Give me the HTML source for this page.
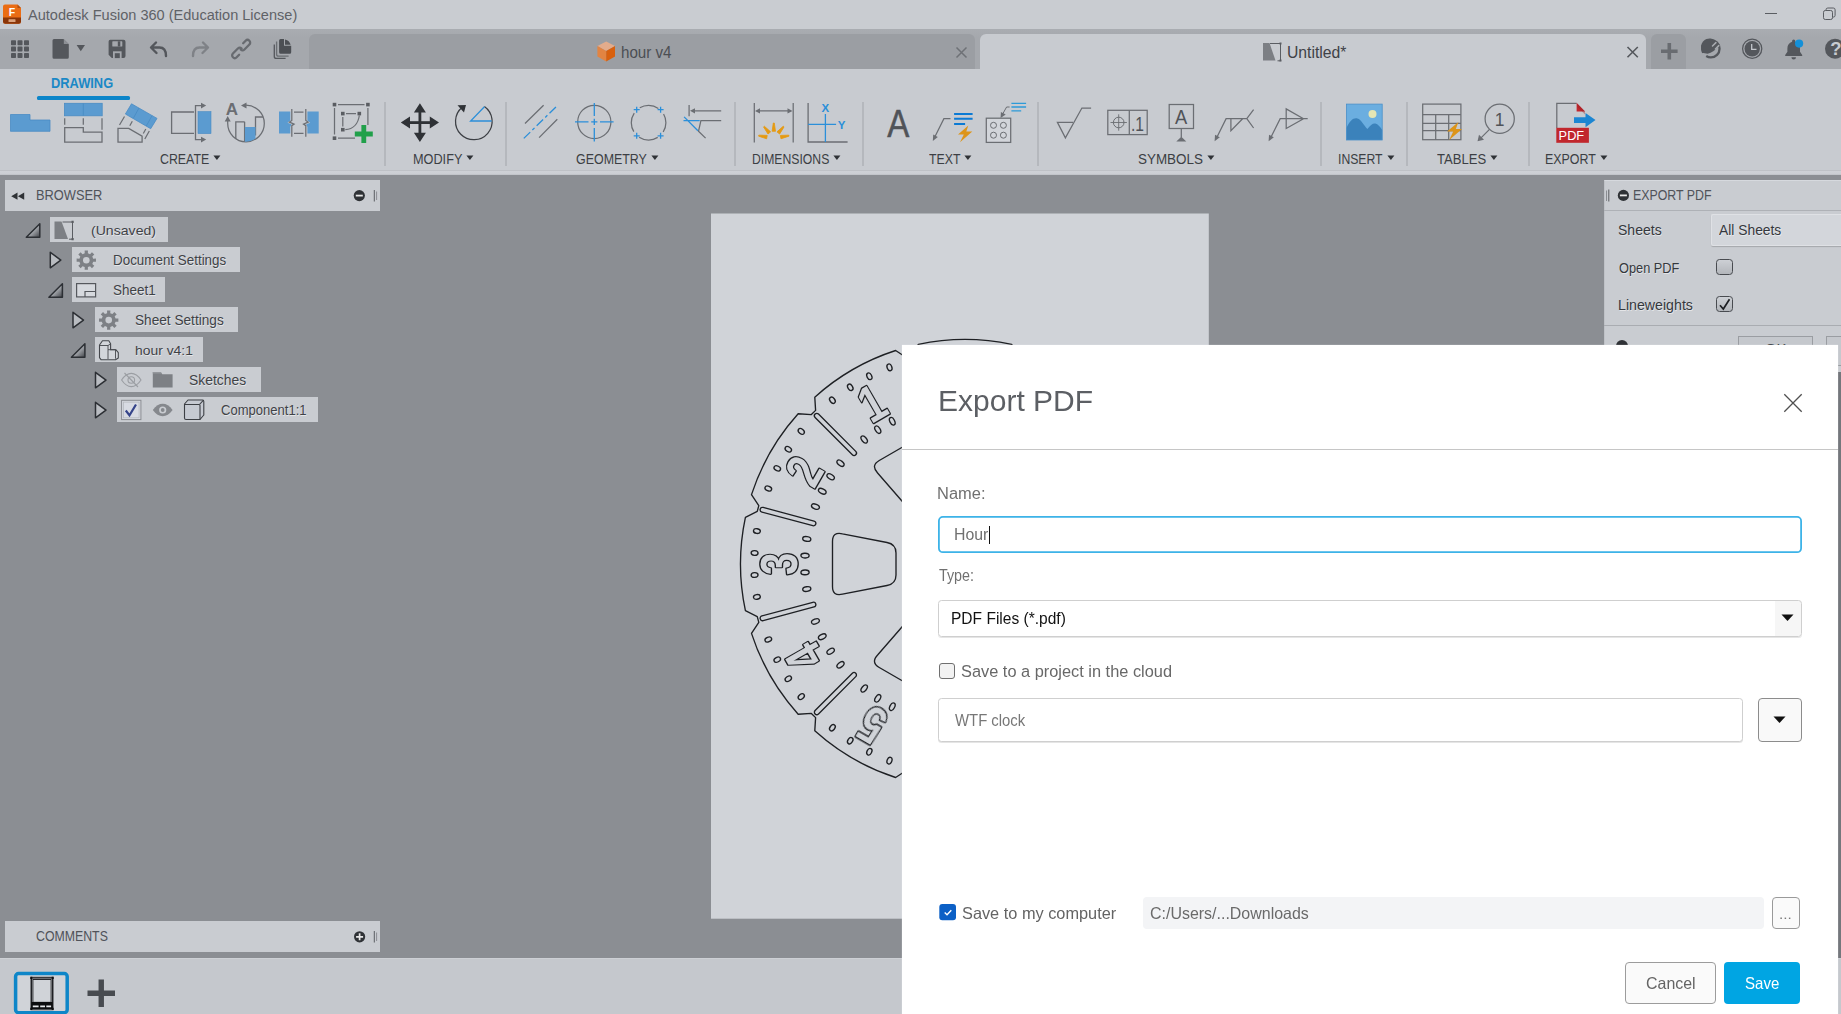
<!DOCTYPE html>
<html lang="en">
<head>
<meta charset="utf-8">
<title>Autodesk Fusion 360 (Education License)</title>
<style>
*{box-sizing:border-box;margin:0;padding:0}
html,body{width:1841px;height:1014px;overflow:hidden;background:#8b8e93;font-family:"Liberation Sans",sans-serif;}
body{position:relative}
.abs{position:absolute}
svg{position:absolute;overflow:visible}
.t{position:absolute;white-space:nowrap;line-height:1;transform-origin:0 0}
#titlebar{position:absolute;left:0;top:0;width:1841px;height:29px;background:#c9ccd1}
#qbar{position:absolute;left:0;top:29px;width:1841px;height:40px;background:linear-gradient(#a9acb1 0,#a5a8ad 8px,#a5a8ad)}
#ribbon{position:absolute;left:0;top:69px;width:1841px;height:102px;background:#c8cbd0}
#ribbonline{position:absolute;left:0;top:170px;width:1841px;height:5px;background:linear-gradient(#bec1c6 0,#bec1c6 1px,#ced1d6 1px,#cbced3 4px,#b9bcc1 5px)}
.tab{position:absolute;top:34px;height:35px;border-radius:6px 6px 0 0}
.sep{position:absolute;top:101.5px;width:2px;height:64px;background:#b5b8bd}
</style>
</head>
<body>
<svg width="500" height="710" viewBox="0 0 500 710" style="left:711px;top:213px"><rect x="0" y="0.5" width="497.8" height="705.2" fill="#d0d3d8"/></svg>
<svg width="1841" height="1014" viewBox="0 0 1841 1014" style="left:0;top:0">
<defs><clipPath id="shc"><rect x="711" y="213.5" width="497.8" height="705.2"/></clipPath></defs>
<g clip-path="url(#shc)" fill="none" stroke="#1e2024" stroke-width="1.35" stroke-linejoin="round">
<path d="M1011.68 344.41A224.5 224.5 0 0 0 918.32 344.41L912.43 356.25L906.65 357.8L895.63 350.49A224.5 224.5 0 0 0 814.78 397.16L815.6 410.37L811.37 414.6L798.16 413.78A224.5 224.5 0 0 0 751.49 494.63L758.8 505.65L757.25 511.43L745.41 517.32A224.5 224.5 0 0 0 745.41 610.68L757.25 616.57L758.8 622.35L751.49 633.37A224.5 224.5 0 0 0 798.16 714.22L811.37 713.4L815.6 717.63L814.78 730.84A224.5 224.5 0 0 0 895.63 777.51L906.65 770.2L912.43 771.75L918.32 783.59A224.5 224.5 0 0 0 1011.68 783.59L1017.57 771.75L1023.35 770.2L1034.37 777.51A224.5 224.5 0 0 0 1115.22 730.84L1114.4 717.63L1118.63 713.4L1131.84 714.22A224.5 224.5 0 0 0 1178.51 633.37L1171.2 622.35L1172.75 616.57L1184.59 610.68A224.5 224.5 0 0 0 1184.59 517.32L1172.75 511.43L1171.2 505.65L1178.51 494.63A224.5 224.5 0 0 0 1131.84 413.78L1118.63 414.6L1114.4 410.37L1115.22 397.16A224.5 224.5 0 0 0 1034.37 350.49L1023.35 357.8L1017.57 356.25L1011.68 344.41Z"/>
<rect x="-2.4" y="-212" width="4.8" height="57.5" rx="2.4" transform="translate(965 564) rotate(-15)"/>
<rect x="-2.4" y="-212" width="4.8" height="57.5" rx="2.4" transform="translate(965 564) rotate(-45)"/>
<rect x="-2.4" y="-212" width="4.8" height="57.5" rx="2.4" transform="translate(965 564) rotate(-75)"/>
<rect x="-2.4" y="-212" width="4.8" height="57.5" rx="2.4" transform="translate(965 564) rotate(-105)"/>
<rect x="-2.4" y="-212" width="4.8" height="57.5" rx="2.4" transform="translate(965 564) rotate(-135)"/>
<rect x="-2.4" y="-212" width="4.8" height="57.5" rx="2.4" transform="translate(965 564) rotate(-165)"/>
<rect x="-2.4" y="-212" width="4.8" height="57.5" rx="2.4" transform="translate(965 564) rotate(-195)"/>
<rect x="-2.4" y="-212" width="4.8" height="57.5" rx="2.4" transform="translate(965 564) rotate(-225)"/>
<rect x="-2.4" y="-212" width="4.8" height="57.5" rx="2.4" transform="translate(965 564) rotate(-255)"/>
<rect x="-2.4" y="-212" width="4.8" height="57.5" rx="2.4" transform="translate(965 564) rotate(-285)"/>
<rect x="-2.4" y="-212" width="4.8" height="57.5" rx="2.4" transform="translate(965 564) rotate(-315)"/>
<rect x="-2.4" y="-212" width="4.8" height="57.5" rx="2.4" transform="translate(965 564) rotate(-345)"/>
<ellipse cx="0" cy="-210.7" rx="2.35" ry="3.45" transform="translate(965 564) rotate(-3)"/>
<ellipse cx="0" cy="-160.2" rx="2.35" ry="4.1" transform="translate(965 564) rotate(-3)"/>
<ellipse cx="0" cy="-210.7" rx="2.35" ry="3.45" transform="translate(965 564) rotate(-9)"/>
<ellipse cx="0" cy="-160.2" rx="2.35" ry="4.1" transform="translate(965 564) rotate(-9)"/>
<ellipse cx="0" cy="-210.7" rx="2.35" ry="3.45" transform="translate(965 564) rotate(-21)"/>
<ellipse cx="0" cy="-160.2" rx="2.35" ry="4.1" transform="translate(965 564) rotate(-21)"/>
<ellipse cx="0" cy="-210.7" rx="2.35" ry="3.45" transform="translate(965 564) rotate(-27)"/>
<ellipse cx="0" cy="-160.2" rx="2.35" ry="4.1" transform="translate(965 564) rotate(-27)"/>
<ellipse cx="0" cy="-210.7" rx="2.35" ry="3.45" transform="translate(965 564) rotate(-33)"/>
<ellipse cx="0" cy="-160.2" rx="2.35" ry="4.1" transform="translate(965 564) rotate(-33)"/>
<ellipse cx="0" cy="-210.7" rx="2.35" ry="3.45" transform="translate(965 564) rotate(-39)"/>
<ellipse cx="0" cy="-160.2" rx="2.35" ry="4.1" transform="translate(965 564) rotate(-39)"/>
<ellipse cx="0" cy="-210.7" rx="2.35" ry="3.45" transform="translate(965 564) rotate(-51)"/>
<ellipse cx="0" cy="-160.2" rx="2.35" ry="4.1" transform="translate(965 564) rotate(-51)"/>
<ellipse cx="0" cy="-210.7" rx="2.35" ry="3.45" transform="translate(965 564) rotate(-57)"/>
<ellipse cx="0" cy="-160.2" rx="2.35" ry="4.1" transform="translate(965 564) rotate(-57)"/>
<ellipse cx="0" cy="-210.7" rx="2.35" ry="3.45" transform="translate(965 564) rotate(-63)"/>
<ellipse cx="0" cy="-160.2" rx="2.35" ry="4.1" transform="translate(965 564) rotate(-63)"/>
<ellipse cx="0" cy="-210.7" rx="2.35" ry="3.45" transform="translate(965 564) rotate(-69)"/>
<ellipse cx="0" cy="-160.2" rx="2.35" ry="4.1" transform="translate(965 564) rotate(-69)"/>
<ellipse cx="0" cy="-210.7" rx="2.35" ry="3.45" transform="translate(965 564) rotate(-81)"/>
<ellipse cx="0" cy="-160.2" rx="2.35" ry="4.1" transform="translate(965 564) rotate(-81)"/>
<ellipse cx="0" cy="-210.7" rx="2.35" ry="3.45" transform="translate(965 564) rotate(-87)"/>
<ellipse cx="0" cy="-160.2" rx="2.35" ry="4.1" transform="translate(965 564) rotate(-87)"/>
<ellipse cx="0" cy="-210.7" rx="2.35" ry="3.45" transform="translate(965 564) rotate(-93)"/>
<ellipse cx="0" cy="-160.2" rx="2.35" ry="4.1" transform="translate(965 564) rotate(-93)"/>
<ellipse cx="0" cy="-210.7" rx="2.35" ry="3.45" transform="translate(965 564) rotate(-99)"/>
<ellipse cx="0" cy="-160.2" rx="2.35" ry="4.1" transform="translate(965 564) rotate(-99)"/>
<ellipse cx="0" cy="-210.7" rx="2.35" ry="3.45" transform="translate(965 564) rotate(-111)"/>
<ellipse cx="0" cy="-160.2" rx="2.35" ry="4.1" transform="translate(965 564) rotate(-111)"/>
<ellipse cx="0" cy="-210.7" rx="2.35" ry="3.45" transform="translate(965 564) rotate(-117)"/>
<ellipse cx="0" cy="-160.2" rx="2.35" ry="4.1" transform="translate(965 564) rotate(-117)"/>
<ellipse cx="0" cy="-210.7" rx="2.35" ry="3.45" transform="translate(965 564) rotate(-123)"/>
<ellipse cx="0" cy="-160.2" rx="2.35" ry="4.1" transform="translate(965 564) rotate(-123)"/>
<ellipse cx="0" cy="-210.7" rx="2.35" ry="3.45" transform="translate(965 564) rotate(-129)"/>
<ellipse cx="0" cy="-160.2" rx="2.35" ry="4.1" transform="translate(965 564) rotate(-129)"/>
<ellipse cx="0" cy="-210.7" rx="2.35" ry="3.45" transform="translate(965 564) rotate(-141)"/>
<ellipse cx="0" cy="-160.2" rx="2.35" ry="4.1" transform="translate(965 564) rotate(-141)"/>
<ellipse cx="0" cy="-210.7" rx="2.35" ry="3.45" transform="translate(965 564) rotate(-147)"/>
<ellipse cx="0" cy="-160.2" rx="2.35" ry="4.1" transform="translate(965 564) rotate(-147)"/>
<ellipse cx="0" cy="-210.7" rx="2.35" ry="3.45" transform="translate(965 564) rotate(-153)"/>
<ellipse cx="0" cy="-160.2" rx="2.35" ry="4.1" transform="translate(965 564) rotate(-153)"/>
<ellipse cx="0" cy="-210.7" rx="2.35" ry="3.45" transform="translate(965 564) rotate(-159)"/>
<ellipse cx="0" cy="-160.2" rx="2.35" ry="4.1" transform="translate(965 564) rotate(-159)"/>
<ellipse cx="0" cy="-210.7" rx="2.35" ry="3.45" transform="translate(965 564) rotate(-171)"/>
<ellipse cx="0" cy="-160.2" rx="2.35" ry="4.1" transform="translate(965 564) rotate(-171)"/>
<ellipse cx="0" cy="-210.7" rx="2.35" ry="3.45" transform="translate(965 564) rotate(-177)"/>
<ellipse cx="0" cy="-160.2" rx="2.35" ry="4.1" transform="translate(965 564) rotate(-177)"/>
<ellipse cx="0" cy="-210.7" rx="2.35" ry="3.45" transform="translate(965 564) rotate(-183)"/>
<ellipse cx="0" cy="-160.2" rx="2.35" ry="4.1" transform="translate(965 564) rotate(-183)"/>
<ellipse cx="0" cy="-210.7" rx="2.35" ry="3.45" transform="translate(965 564) rotate(-189)"/>
<ellipse cx="0" cy="-160.2" rx="2.35" ry="4.1" transform="translate(965 564) rotate(-189)"/>
<ellipse cx="0" cy="-210.7" rx="2.35" ry="3.45" transform="translate(965 564) rotate(-201)"/>
<ellipse cx="0" cy="-160.2" rx="2.35" ry="4.1" transform="translate(965 564) rotate(-201)"/>
<ellipse cx="0" cy="-210.7" rx="2.35" ry="3.45" transform="translate(965 564) rotate(-207)"/>
<ellipse cx="0" cy="-160.2" rx="2.35" ry="4.1" transform="translate(965 564) rotate(-207)"/>
<ellipse cx="0" cy="-210.7" rx="2.35" ry="3.45" transform="translate(965 564) rotate(-213)"/>
<ellipse cx="0" cy="-160.2" rx="2.35" ry="4.1" transform="translate(965 564) rotate(-213)"/>
<ellipse cx="0" cy="-210.7" rx="2.35" ry="3.45" transform="translate(965 564) rotate(-219)"/>
<ellipse cx="0" cy="-160.2" rx="2.35" ry="4.1" transform="translate(965 564) rotate(-219)"/>
<ellipse cx="0" cy="-210.7" rx="2.35" ry="3.45" transform="translate(965 564) rotate(-231)"/>
<ellipse cx="0" cy="-160.2" rx="2.35" ry="4.1" transform="translate(965 564) rotate(-231)"/>
<ellipse cx="0" cy="-210.7" rx="2.35" ry="3.45" transform="translate(965 564) rotate(-237)"/>
<ellipse cx="0" cy="-160.2" rx="2.35" ry="4.1" transform="translate(965 564) rotate(-237)"/>
<ellipse cx="0" cy="-210.7" rx="2.35" ry="3.45" transform="translate(965 564) rotate(-243)"/>
<ellipse cx="0" cy="-160.2" rx="2.35" ry="4.1" transform="translate(965 564) rotate(-243)"/>
<ellipse cx="0" cy="-210.7" rx="2.35" ry="3.45" transform="translate(965 564) rotate(-249)"/>
<ellipse cx="0" cy="-160.2" rx="2.35" ry="4.1" transform="translate(965 564) rotate(-249)"/>
<ellipse cx="0" cy="-210.7" rx="2.35" ry="3.45" transform="translate(965 564) rotate(-261)"/>
<ellipse cx="0" cy="-160.2" rx="2.35" ry="4.1" transform="translate(965 564) rotate(-261)"/>
<ellipse cx="0" cy="-210.7" rx="2.35" ry="3.45" transform="translate(965 564) rotate(-267)"/>
<ellipse cx="0" cy="-160.2" rx="2.35" ry="4.1" transform="translate(965 564) rotate(-267)"/>
<ellipse cx="0" cy="-210.7" rx="2.35" ry="3.45" transform="translate(965 564) rotate(-273)"/>
<ellipse cx="0" cy="-160.2" rx="2.35" ry="4.1" transform="translate(965 564) rotate(-273)"/>
<ellipse cx="0" cy="-210.7" rx="2.35" ry="3.45" transform="translate(965 564) rotate(-279)"/>
<ellipse cx="0" cy="-160.2" rx="2.35" ry="4.1" transform="translate(965 564) rotate(-279)"/>
<ellipse cx="0" cy="-210.7" rx="2.35" ry="3.45" transform="translate(965 564) rotate(-291)"/>
<ellipse cx="0" cy="-160.2" rx="2.35" ry="4.1" transform="translate(965 564) rotate(-291)"/>
<ellipse cx="0" cy="-210.7" rx="2.35" ry="3.45" transform="translate(965 564) rotate(-297)"/>
<ellipse cx="0" cy="-160.2" rx="2.35" ry="4.1" transform="translate(965 564) rotate(-297)"/>
<ellipse cx="0" cy="-210.7" rx="2.35" ry="3.45" transform="translate(965 564) rotate(-303)"/>
<ellipse cx="0" cy="-160.2" rx="2.35" ry="4.1" transform="translate(965 564) rotate(-303)"/>
<ellipse cx="0" cy="-210.7" rx="2.35" ry="3.45" transform="translate(965 564) rotate(-309)"/>
<ellipse cx="0" cy="-160.2" rx="2.35" ry="4.1" transform="translate(965 564) rotate(-309)"/>
<ellipse cx="0" cy="-210.7" rx="2.35" ry="3.45" transform="translate(965 564) rotate(-321)"/>
<ellipse cx="0" cy="-160.2" rx="2.35" ry="4.1" transform="translate(965 564) rotate(-321)"/>
<ellipse cx="0" cy="-210.7" rx="2.35" ry="3.45" transform="translate(965 564) rotate(-327)"/>
<ellipse cx="0" cy="-160.2" rx="2.35" ry="4.1" transform="translate(965 564) rotate(-327)"/>
<ellipse cx="0" cy="-210.7" rx="2.35" ry="3.45" transform="translate(965 564) rotate(-333)"/>
<ellipse cx="0" cy="-160.2" rx="2.35" ry="4.1" transform="translate(965 564) rotate(-333)"/>
<ellipse cx="0" cy="-210.7" rx="2.35" ry="3.45" transform="translate(965 564) rotate(-339)"/>
<ellipse cx="0" cy="-160.2" rx="2.35" ry="4.1" transform="translate(965 564) rotate(-339)"/>
<ellipse cx="0" cy="-210.7" rx="2.35" ry="3.45" transform="translate(965 564) rotate(-351)"/>
<ellipse cx="0" cy="-160.2" rx="2.35" ry="4.1" transform="translate(965 564) rotate(-351)"/>
<ellipse cx="0" cy="-210.7" rx="2.35" ry="3.45" transform="translate(965 564) rotate(-357)"/>
<ellipse cx="0" cy="-160.2" rx="2.35" ry="4.1" transform="translate(965 564) rotate(-357)"/>
<path d="M-22.5 -132.5Q-32.5 -132.5 -30.2 -122.5L-21.5 -78Q-19.8 -69 -11 -69L11 -69Q19.8 -69 21.5 -78L30.2 -122.5Q32.5 -132.5 22.5 -132.5Z" transform="translate(965 564) rotate(-30)"/>
<path d="M-22.5 -132.5Q-32.5 -132.5 -30.2 -122.5L-21.5 -78Q-19.8 -69 -11 -69L11 -69Q19.8 -69 21.5 -78L30.2 -122.5Q32.5 -132.5 22.5 -132.5Z" transform="translate(965 564) rotate(-90)"/>
<path d="M-22.5 -132.5Q-32.5 -132.5 -30.2 -122.5L-21.5 -78Q-19.8 -69 -11 -69L11 -69Q19.8 -69 21.5 -78L30.2 -122.5Q32.5 -132.5 22.5 -132.5Z" transform="translate(965 564) rotate(-150)"/>
<path d="M-22.5 -132.5Q-32.5 -132.5 -30.2 -122.5L-21.5 -78Q-19.8 -69 -11 -69L11 -69Q19.8 -69 21.5 -78L30.2 -122.5Q32.5 -132.5 22.5 -132.5Z" transform="translate(965 564) rotate(-210)"/>
<path d="M-22.5 -132.5Q-32.5 -132.5 -30.2 -122.5L-21.5 -78Q-19.8 -69 -11 -69L11 -69Q19.8 -69 21.5 -78L30.2 -122.5Q32.5 -132.5 22.5 -132.5Z" transform="translate(965 564) rotate(-270)"/>
<path d="M-22.5 -132.5Q-32.5 -132.5 -30.2 -122.5L-21.5 -78Q-19.8 -69 -11 -69L11 -69Q19.8 -69 21.5 -78L30.2 -122.5Q32.5 -132.5 22.5 -132.5Z" transform="translate(965 564) rotate(-330)"/>
</g>
<g clip-path="url(#shc)" opacity="0.999" font-family="Liberation Sans, sans-serif" font-weight="bold" font-size="51.4" text-anchor="middle" stroke-linejoin="round" paint-order="stroke" fill="#d0d3d8" stroke="#1e2024" stroke-width="2.8">
<text transform="translate(965 564) rotate(-30) translate(0 -167.8) scale(0.79 1)">1</text>
<text transform="translate(965 564) rotate(-60) translate(0 -167.8) scale(0.79 1)">2</text>
<text transform="translate(965 564) rotate(-90) translate(0 -167.8) scale(0.79 1)">3</text>
<text transform="translate(965 564) rotate(-120) translate(0 -167.8) scale(0.79 1)">4</text>
<text transform="translate(965 564) rotate(-150) translate(0 -167.8) scale(0.79 1)">5</text>
</g>
</svg>
<div id="titlebar"></div><div id="qbar"></div>
<div class="tab" style="left:309px;width:666px;background:#9b9ea3"></div>
<div class="tab" style="left:980px;width:666px;background:#c8cbd0"></div>
<div class="tab" style="left:1651px;width:35px;background:#9b9ea3"></div>
<div id="ribbon"></div><div id="ribbonline"></div>
<div class="t" style="left:28.39px;top:7px;font-size:15.5px;color:#5f6267;transform:scaleX(0.9384);">Autodesk Fusion 360 (Education License)</div>
<div class="t" style="left:620.77px;top:45px;font-size:16px;color:#4b4e53;transform:scaleX(0.9471);">hour v4</div>
<div class="t" style="left:1286.69px;top:45px;font-size:16px;color:#3f4247;transform:scaleX(0.9833);">Untitled*</div>
<div class="t" style="left:50.81px;top:76px;font-size:14px;color:#1b88c6;font-weight:bold;transform:scaleX(0.9182);">DRAWING</div>
<div class="abs" style="left:37px;top:95.5px;width:92.5px;height:4px;background:#0c85c9;border-radius:1.5px"></div>
<div class="t" style="left:159.51px;top:152px;font-size:14px;color:#3c3f44;transform:scaleX(0.883);">CREATE</div>
<svg width="9" height="6" viewBox="0 0 9 6" style="left:213px;top:155px"><path d="M0.4 0.4h7l-3.5 4.7z" fill="#2f3236"/></svg>
<div class="t" style="left:412.83px;top:152px;font-size:14px;color:#3c3f44;transform:scaleX(0.907);">MODIFY</div>
<svg width="9" height="6" viewBox="0 0 9 6" style="left:466.3px;top:155px"><path d="M0.4 0.4h7l-3.5 4.7z" fill="#2f3236"/></svg>
<div class="t" style="left:575.83px;top:152px;font-size:14px;color:#3c3f44;transform:scaleX(0.8878);">GEOMETRY</div>
<svg width="9" height="6" viewBox="0 0 9 6" style="left:650.5px;top:155px"><path d="M0.4 0.4h7l-3.5 4.7z" fill="#2f3236"/></svg>
<div class="t" style="left:751.98px;top:152px;font-size:14px;color:#3c3f44;transform:scaleX(0.8715);">DIMENSIONS</div>
<svg width="9" height="6" viewBox="0 0 9 6" style="left:833px;top:155px"><path d="M0.4 0.4h7l-3.5 4.7z" fill="#2f3236"/></svg>
<div class="t" style="left:929.18px;top:152px;font-size:14px;color:#3c3f44;transform:scaleX(0.8787);">TEXT</div>
<svg width="9" height="6" viewBox="0 0 9 6" style="left:964.4px;top:155px"><path d="M0.4 0.4h7l-3.5 4.7z" fill="#2f3236"/></svg>
<div class="t" style="left:1138px;top:152px;font-size:14px;color:#3c3f44;transform:scaleX(0.9587);">SYMBOLS</div>
<svg width="9" height="6" viewBox="0 0 9 6" style="left:1206.9px;top:155px"><path d="M0.4 0.4h7l-3.5 4.7z" fill="#2f3236"/></svg>
<div class="t" style="left:1338.39px;top:152px;font-size:14px;color:#3c3f44;transform:scaleX(0.8724);">INSERT</div>
<svg width="9" height="6" viewBox="0 0 9 6" style="left:1386.5px;top:155px"><path d="M0.4 0.4h7l-3.5 4.7z" fill="#2f3236"/></svg>
<div class="t" style="left:1436.98px;top:152px;font-size:14px;color:#3c3f44;transform:scaleX(0.9327);">TABLES</div>
<svg width="9" height="6" viewBox="0 0 9 6" style="left:1490px;top:155px"><path d="M0.4 0.4h7l-3.5 4.7z" fill="#2f3236"/></svg>
<div class="t" style="left:1544.85px;top:152px;font-size:14px;color:#3c3f44;transform:scaleX(0.8876);">EXPORT</div>
<svg width="9" height="6" viewBox="0 0 9 6" style="left:1600.2px;top:155px"><path d="M0.4 0.4h7l-3.5 4.7z" fill="#2f3236"/></svg>
<div class="sep" style="left:384px"></div>
<div class="sep" style="left:505px"></div>
<div class="sep" style="left:734px"></div>
<div class="sep" style="left:862px"></div>
<div class="sep" style="left:1037px"></div>
<div class="sep" style="left:1320px"></div>
<div class="sep" style="left:1406px"></div>
<div class="sep" style="left:1528px"></div>
<svg id="icons" width="1841" height="176" viewBox="0 0 1841 176" style="left:0;top:0">
<g><path d="M5 4.5h12.5l3.5 3.5v13.5a2.3 2.3 0 0 1-2.3 2.3H5.3A2.3 2.3 0 0 1 3 21.5V6.5a2 2 0 0 1 2-2z" fill="#ea6c14"/><path d="M3 17.5h18v4a2.3 2.3 0 0 1-2.3 2.3H5.3A2.3 2.3 0 0 1 3 21.5z" fill="#8a3508"/><path d="M17.5 4.5l3.5 3.5h-3.5z" fill="#b4500e"/><rect x="8.5" y="19.3" width="7" height="2.6" rx="0.5" fill="#dca27c"/><text x="8.7" y="15.6" font-size="10.5" font-weight="bold" fill="#fff" font-family="Liberation Sans, sans-serif">F</text></g>
<path d="M1765 13.5h12" stroke="#5a5d62" stroke-width="1"/>
<g fill="none" stroke="#5a5d62" stroke-width="1"><rect x="1823.5" y="10.5" width="9" height="9" rx="1.8"/><path d="M1826 10.3V9.8a1.8 1.8 0 0 1 1.8-1.8h5.5a1.8 1.8 0 0 1 1.8 1.8v5.5a1.8 1.8 0 0 1-1.8 1.8h-0.6"/></g>
<g fill="#54575c"><rect x="11" y="40.2" width="5" height="5" rx="0.8"/><rect x="11" y="46.6" width="5" height="5" rx="0.8"/><rect x="11" y="53" width="5" height="5" rx="0.8"/><rect x="17.5" y="40.2" width="5" height="5" rx="0.8"/><rect x="17.5" y="46.6" width="5" height="5" rx="0.8"/><rect x="17.5" y="53" width="5" height="5" rx="0.8"/><rect x="24" y="40.2" width="5" height="5" rx="0.8"/><rect x="24" y="46.6" width="5" height="5" rx="0.8"/><rect x="24" y="53" width="5" height="5" rx="0.8"/></g>
<path d="M54 39h9.5l5.3 5.3V57.3a1.5 1.5 0 0 1-1.5 1.5H54a1.5 1.5 0 0 1-1.5-1.5V40.5A1.5 1.5 0 0 1 54 39z" fill="#54575c"/><path d="M63.8 39.2v4.8h4.8z" fill="#8d9095"/>
<path d="M76.6 45h8.4l-4.2 6.2z" fill="#54575c"/>
<path d="M110.3 39.8h13.2a2 2 0 0 1 2 2v14.2a2 2 0 0 1-2 2h-11.7l-3.2-3.2V41.5a1.7 1.7 0 0 1 1.7-1.7z" fill="#54575c"/><rect x="112.3" y="41.3" width="10" height="5.2" rx="0.6" fill="#a4a7ac"/><rect x="117.8" y="41.3" width="2.5" height="5.2" fill="#54575c"/><rect x="113" y="51.3" width="8.6" height="6.8" fill="#a4a7ac"/><rect x="114.8" y="53.2" width="5" height="4.9" fill="#54575c"/>
<path d="M156 42.5l-5 5 5.5 5.5M151.5 47.5h8c4 0 6.5 3 6.5 8.5" fill="none" stroke="#54575c" stroke-width="2.4" stroke-linecap="round" stroke-linejoin="round"/>
<path d="M203 42.5l5 5-5.5 5.5M207.5 47.5h-8c-4 0-6.5 3-6.5 8.5" fill="none" stroke="#7f8287" stroke-width="2.4" stroke-linecap="round" stroke-linejoin="round"/>
<g fill="none" stroke="#686b70" stroke-width="2.3" stroke-linecap="round" transform="translate(241.15 49) rotate(-45)"><path d="M5.5 -2.65H9A2.65 2.65 0 0 1 9 2.65H2A2.65 2.65 0 0 1 -0.65 0"/><path d="M-5.5 2.65H-9A2.65 2.65 0 0 1 -9 -2.65H-2A2.65 2.65 0 0 1 0.65 0"/></g>
<path d="M274.3 44.6v11.8a2 2 0 0 0 2 2h9.3" fill="none" stroke="#54575c" stroke-width="1.3"/><path d="M276.6 41.6v12.6a2 2 0 0 0 2 2h10" fill="none" stroke="#6a6d72" stroke-width="1.3"/><path d="M280.6 39h3.4v6.8h7.2v6.5a1.5 1.5 0 0 1-1.5 1.5h-9.1a1.5 1.5 0 0 1-1.5-1.5V40.5a1.5 1.5 0 0 1 1.5-1.5z" fill="#4c4f54"/><path d="M285 39.6c3 0.6 5 2.6 5.6 5.2h-5.6z" fill="#4c4f54"/>
<g><path d="M606.2 41.4l8.8 4.6-8.8 5-8.8-5z" fill="#e3ac8c"/><path d="M597.4 46l8.8 5v10.5l-8.8-5z" fill="#e28442"/><path d="M615 46l-8.8 5v10.5l8.8-5z" fill="#d8600e"/></g>
<path d="M956.5 47.5l10 10M966.5 47.5l-10 10" stroke="#6e7176" stroke-width="1.5" fill="none"/>
<g><path d="M1263 43h6.5l6 17.5h-12.5z" fill="#7c7f84"/><path d="M1270 43.5h10.5v17.3h-3" fill="none" stroke="#5a5d62" stroke-width="1"/><path d="M1279.5 42.5h2v2h-2zM1279.5 59.5h2v2h-2z" fill="#5a5d62"/></g>
<path d="M1627.5 47l10.3 10.3M1637.8 47l-10.3 10.3" stroke="#55585d" stroke-width="1.6" fill="none"/>
<path d="M1661 51.2h16.6M1669.3 43v16.4" stroke="#696c71" stroke-width="3.6" fill="none"/>
<g><circle cx="1710.9" cy="48.8" r="8.65" fill="none" stroke="#54575c" stroke-width="2.3" stroke-dasharray="49.82 4.53" stroke-dashoffset="-22.95"/><path d="M1703.3 53l4.4 0.7Q1713.5 52 1718.3 47A8.65 8.65 0 1 0 1703.3 53z" fill="#54575c"/><path d="M1712.5 46l3.4-3.4M1715.4 49l3.4-3.4" stroke="#a9acb1" stroke-width="1.5" stroke-linecap="round"/></g>
<g><circle cx="1752.2" cy="48.7" r="9.6" fill="none" stroke="#54575c" stroke-width="1.25"/><circle cx="1752.2" cy="48.7" r="7.7" fill="#54575c"/><path d="M1751.7 44v5.3h4.8" fill="none" stroke="#c4c7cc" stroke-width="1.3"/></g>
<g><path d="M1793.7 39.5a1.6 1.6 0 0 1 1.6 1.6v0.6c3 0.8 4.7 3.4 4.7 6.5v3.6l2.2 3.3v1H1785.2v-1l2.2-3.3v-3.6c0-3.1 1.7-5.7 4.7-6.5v-0.6a1.6 1.6 0 0 1 1.6-1.6zM1791.4 57.3h4.6a2.3 2.3 0 0 1-4.6 0z" fill="#54575c"/><circle cx="1799.1" cy="43.6" r="4.1" fill="#1490d8"/></g>
<g><circle cx="1835" cy="48.7" r="10" fill="#54575c"/><text x="1830.2" y="55.3" font-size="18.5" font-weight="bold" fill="#c8cbd0" font-family="Liberation Sans, sans-serif">?</text></g>
<path d="M10.5 114.5h19.5v5.5h20v11.3h-39.5z" fill="#5b9bd0" stroke="#4a8cc4" stroke-width="0.8"/>
<g><rect x="64.4" y="103.3" width="37.8" height="12.5" fill="#5b9bd0" stroke="#4a8cc4" stroke-width="0.8"/><path d="M83.3 103.3v12.5" stroke="#4a8cc4" stroke-width="0.9"/><path d="M64.7 118.3v6.5M83.3 118.3v6.5M102 118.3v11.5" stroke="#6b6e73" stroke-width="1.25" fill="none"/><path d="M64.7 127.6h18.6v4.6h18.7v10h-37.3z" fill="none" stroke="#6b6e73" stroke-width="1.3"/></g>
<g><path d="M131.5 103.8l25.5 14.6-6.3 10.3-25.3-14.7z" fill="#5b9bd0" stroke="#4a8cc4" stroke-width="0.8"/><path d="M139 108l-5.7 10.3M152 115.7l-5.7 10.3" stroke="#4a8cc4" stroke-width="0.9"/><path d="M124.5 116.5l-5 8.5M132.3 121.3l-2.5 4.5M145.8 129l-2.5 4.5M149.3 131l-4.5 8" stroke="#6b6e73" stroke-width="1.25" fill="none"/><path d="M118 128.4h10.7l13.4 7.8v6h-24.1z" fill="none" stroke="#6b6e73" stroke-width="1.3"/></g>
<g><path d="M194 112h-22.4v21.4h22.4" fill="none" stroke="#6b6e73" stroke-width="1.3"/><rect x="198" y="111.6" width="13" height="22" fill="#5b9bd0" stroke="#4a8cc4" stroke-width="0.6"/><path d="M201 105.6h-5.5v34h5.5" fill="none" stroke="#6b6e73" stroke-width="1.3"/><path d="M201 102.8l5.2 2.8-5.2 2.8zM201 136.8l5.2 2.8-5.2 2.8z" fill="#6b6e73"/></g>
<g><text x="225.7" y="114.9" font-size="17" font-weight="bold" fill="#6b6e73" font-family="Liberation Sans, sans-serif">A</text><path d="M246 105.2a18.3 18.3 0 1 1-18.3 18.3v-4" fill="none" stroke="#6b6e73" stroke-width="1.25"/><path d="M241 105.5l5.5-3v6zM224.7 121.5l3-5.5 3 5.5z" fill="#6b6e73"/><path d="M235.8 139V121.8h8.8" fill="none" stroke="#6b6e73" stroke-width="1.3"/><path d="M244.6 121.8v19.7" stroke="#6b6e73" stroke-width="1.3"/><path d="M255.5 135.5V117h7.5" fill="none" stroke="#6b6e73" stroke-width="1.3"/><path d="M244.9 127h10.6v11.5a18 18 0 0 1-10.6 3.3z" fill="#5b9bd0"/></g>
<g><path d="M279 111.6h11.3v9l-2.8 2.2 4 1.5-1.2 2.7v6.6h-11.3z" fill="#5b9bd0"/><path d="M318.7 111.6h-11.3v9l2.8 2.2-4 1.5 1.2 2.7v6.6h11.3z" fill="#5b9bd0"/><path d="M291.8 109v11.5l-2.3 1.6 4.6 2-2.3 1.6v11M305.8 109v11.5l2.3 1.6-4.6 2 2.3 1.6v11" fill="none" stroke="#6b6e73" stroke-width="1.25"/><path d="M294 112h9.5M294 133.3h9.5" stroke="#6b6e73" stroke-width="1.25"/></g>
<g><path d="M338 104.6h26.5M334.5 108v26.5M367.9 108v17M338 138.2h17" stroke="#6b6e73" stroke-width="1.25" fill="none"/><path d="M346 113.6h10M342.8 117v9.5" stroke="#6b6e73" stroke-width="1.25" fill="none"/><path d="M359.3 115.5c-1 8-6 13.5-14 14.2" fill="none" stroke="#6b6e73" stroke-width="1.25"/>
<rect x="332.7" y="102.8" width="3.6" height="3.6" fill="#5a5d62"/>
<rect x="366.1" y="102.8" width="3.6" height="3.6" fill="#5a5d62"/>
<rect x="332.7" y="136.4" width="3.6" height="3.6" fill="#5a5d62"/>
<rect x="341" y="111.8" width="3.6" height="3.6" fill="#5a5d62"/>
<rect x="357.5" y="111.8" width="3.6" height="3.6" fill="#5a5d62"/>
<rect x="341" y="127.9" width="3.6" height="3.6" fill="#5a5d62"/>
<path d="M361.4 125v6.6h-6.6v4.8h6.6v6.6h4.8v-6.6h6.6v-4.8h-6.6V125z" fill="#21a04a"/></g>
<g fill="#2f3236"><path d="M419.9 103.2l6 9.2h-12zM419.9 142l6-9.2h-12zM400.8 122.6l9.2-6v12zM439 122.6l-9.2-6v12z"/><rect x="418.5" y="111" width="2.8" height="23"/><rect x="408" y="121.2" width="23" height="2.8"/></g>
<g><path d="M484.4 106.5a18.3 18.3 0 1 1-22.2 0.8" fill="none" stroke="#3c3f44" stroke-width="1.25"/><path d="M457.5 105.3l8.5-0.3-2 7.5z" fill="#2f3236"/><path d="M484.4 106.8l-13.8 14.2h21" fill="none" stroke="#2b8fd9" stroke-width="1.3"/></g>
<g fill="none"><path d="M525 123.5l18.6-18.2M539.1 137.6l18.2-18.3" stroke="#6b6e73" stroke-width="1.25"/><path d="M523.8 138.4l33.5-32.8" stroke="#2b8fd9" stroke-width="1.3" stroke-dasharray="9 3 3 3"/></g>
<g fill="none"><circle cx="594.3" cy="121.9" r="16.6" stroke="#6b6e73" stroke-width="1.25"/><path d="M575 121.9h13.5M591.2 121.9h6.2M600 121.9h13.6M594.3 102.9v13M594.3 118.8v6.2M594.3 128v13.4" stroke="#2b8fd9" stroke-width="1.3"/></g>
<g fill="none"><circle cx="648.6" cy="122.7" r="17.3" stroke="#6b6e73" stroke-width="1.25" stroke-dasharray="19.6 7.58" stroke-dashoffset="-17.4"/>
<path d="M633.7 109.7h6M636.7 106.7v6" stroke="#2b8fd9" stroke-width="1.3"/>
<path d="M657.6 109.7h6M660.6 106.7v6" stroke="#2b8fd9" stroke-width="1.3"/>
<path d="M633.7 135.8h6M636.7 132.8v6" stroke="#2b8fd9" stroke-width="1.3"/>
<path d="M657.6 135.8h6M660.6 132.8v6" stroke="#2b8fd9" stroke-width="1.3"/>
</g>
<g fill="none"><path d="M689.1 105v11.3M692 110.8h29.2M721.2 120.7h-20.3l-2.4 10.6 7.1 6.8" stroke="#6b6e73" stroke-width="1.25"/><path d="M690 110.8l5-2.6v5.2z" fill="#6b6e73"/><path d="M683.5 120.7h16.2M684.1 116.9l13.8 13.8" stroke="#2b8fd9" stroke-width="1.3"/></g>
<g><path d="M754.3 102.9v39.7M793.2 102.9v39.7M757 110.9h33.5" fill="none" stroke="#6b6e73" stroke-width="1.25"/><path d="M755 110.9l5-2.6v5.2zM792.5 110.9l-5-2.6v5.2z" fill="#6b6e73"/>
<path d="M-1.7 -7l1.2-8.3h1l1.2 8.3z" transform="translate(773.8 138.3) rotate(-80)" fill="#e59a12" stroke="#e59a12" stroke-width="0.8" stroke-linejoin="round"/>
<path d="M-1.7 -7l1.2-8.3h1l1.2 8.3z" transform="translate(773.8 138.3) rotate(-40)" fill="#e59a12" stroke="#e59a12" stroke-width="0.8" stroke-linejoin="round"/>
<path d="M-1.7 -7l1.2-8.3h1l1.2 8.3z" transform="translate(773.8 138.3) rotate(0)" fill="#e59a12" stroke="#e59a12" stroke-width="0.8" stroke-linejoin="round"/>
<path d="M-1.7 -7l1.2-8.3h1l1.2 8.3z" transform="translate(773.8 138.3) rotate(40)" fill="#e59a12" stroke="#e59a12" stroke-width="0.8" stroke-linejoin="round"/>
<path d="M-1.7 -7l1.2-8.3h1l1.2 8.3z" transform="translate(773.8 138.3) rotate(80)" fill="#e59a12" stroke="#e59a12" stroke-width="0.8" stroke-linejoin="round"/>
</g>
<g><path d="M808.1 102.9v39.1h39.5" fill="none" stroke="#6b6e73" stroke-width="1.3"/><path d="M825.4 113.9v28M808.1 124.4h28" stroke="#2b8fd9" stroke-width="1.3"/><text x="821.6" y="111.6" font-size="11.5" font-weight="bold" fill="#2b8fd9" font-family="Liberation Sans, sans-serif">X</text><text x="837.7" y="128.8" font-size="11.5" font-weight="bold" fill="#2b8fd9" font-family="Liberation Sans, sans-serif">Y</text></g>
<text x="887.3" y="136.6" font-size="38.5" fill="#505358" stroke="#505358" stroke-width="0.5" font-family="Liberation Sans, sans-serif" transform="translate(886.5 0) scale(0.86 1) translate(-886.5 0)">A</text>
<g><path d="M950.5 118.7h-6.6l-9.5 19" fill="none" stroke="#6b6e73" stroke-width="1.25"/><path d="M932.8 141l0.4-6.5 4.6 2.4z" fill="#6b6e73"/><path d="M954.1 114h18.5M954.1 118.8h18.5M954.1 124h11" stroke="#0b7ad4" stroke-width="2.1"/><path d="M968.3 125.5l-10.3 9h5.8l-3.8 7.8 12.3-10.8h-6z" fill="#dd951a"/></g>
<g><rect x="986.3" y="118.2" width="24.4" height="24.2" fill="#d2d5da" stroke="#6b6e73" stroke-width="1.25"/>
<circle cx="993.5" cy="125.3" r="3" fill="none" stroke="#6b6e73" stroke-width="1"/>
<circle cx="1003.4" cy="125.3" r="3" fill="none" stroke="#6b6e73" stroke-width="1"/>
<circle cx="993.5" cy="135.2" r="3" fill="none" stroke="#6b6e73" stroke-width="1"/>
<circle cx="1003.4" cy="135.2" r="3" fill="none" stroke="#6b6e73" stroke-width="1"/>
<path d="M1009.6 107h-3l-4.2 7.5" fill="none" stroke="#6b6e73" stroke-width="1"/><path d="M1000.6 118l0.3-6 4.8 2.5z" fill="#6b6e73"/><path d="M1011.4 103.4h14.7M1011.4 107h14.7M1011.4 110.9h9.8" stroke="#2d9bd8" stroke-width="1.3"/></g>
<path d="M1073 122.3h-15.6l8 15.5 16.5-29.8h9.2" fill="none" stroke="#6b6e73" stroke-width="1.25"/>
<g><rect x="1107.8" y="110.3" width="39.4" height="24.3" fill="none" stroke="#6b6e73" stroke-width="1.25"/><path d="M1129.3 110.3v24.3" stroke="#6b6e73" stroke-width="1.25"/><circle cx="1118.7" cy="122.5" r="5.3" fill="none" stroke="#6b6e73" stroke-width="1"/><path d="M1110.5 122.5h16.4M1118.7 114.3v16.4" stroke="#6b6e73" stroke-width="0.9"/><text x="1131" y="130.7" font-size="19.5" fill="#505358" font-family="Liberation Sans, sans-serif" transform="translate(1131 0) scale(0.8 1) translate(-1131 0)">.1</text></g>
<g><rect x="1169.2" y="104.5" width="24.3" height="24" fill="none" stroke="#6b6e73" stroke-width="1.25"/><text x="1175" y="123.7" font-size="19.5" fill="#505358" font-family="Liberation Sans, sans-serif" transform="translate(1175 0) scale(0.94 1) translate(-1175 0)">A</text><path d="M1181.3 128.5v9" stroke="#6b6e73" stroke-width="1.25"/><path d="M1181.3 136.7l5 4.8h-10z" fill="#6b6e73"/></g>
<g fill="none" stroke="#6b6e73" stroke-width="1.25"><path d="M1216.3 138.5l9.8-19.8h20.7l6.8-9M1246.8 118.7l6.8 9.3M1230.9 118.7v12l11.7-12"/><path d="M1214.6 141.3l0.4-6.5 4.8 2.5z" fill="#6b6e73" stroke="none"/></g>
<g fill="none" stroke="#6b6e73" stroke-width="1.25"><path d="M1270.3 138.5l9.9-19.8h27.5M1286.2 108.9v19.6l17.3-9.8z"/><path d="M1268.6 141.3l0.4-6.5 4.8 2.5z" fill="#6b6e73" stroke="none"/></g>
<g><rect x="1346.4" y="104.1" width="35.8" height="35.9" fill="#6baee0"/><path d="M1346.4 128c3.5-7.5 7-10.5 11-9.5s6 6.5 10 10.5c3-4 5.5-6 8-5.5s4.5 3 6.8 6.5v10h-35.8z" fill="#3b82bb"/><circle cx="1372.5" cy="113.9" r="4" fill="#e6e6b4"/><rect x="1346.4" y="104.1" width="35.8" height="35.9" fill="none" stroke="#4a90c8" stroke-width="0.8"/></g>
<g fill="none" stroke="#6b6e73" stroke-width="1.25"><rect x="1422.7" y="104.1" width="38.2" height="35.6"/><path d="M1422.7 114.7h38.2M1422.7 123.4h38.2M1422.7 130.7h38.2M1435.7 114.7v25M1448.7 114.7v25"/></g>
<path d="M1458.5 122l-11.5 9.5h6.2l-4 8.5 12.8-11h-6.2z" fill="#dd951a"/>
<g><circle cx="1499.7" cy="118.8" r="14.6" fill="none" stroke="#6b6e73" stroke-width="1.25"/><path d="M1489.5 129.4l-9 9" stroke="#6b6e73" stroke-width="1.25"/><path d="M1477.5 141.3l1.5-6.5 5 5z" fill="#6b6e73"/><text x="1494.8" y="126" font-size="19" fill="#505358" font-family="Liberation Sans, sans-serif" transform="translate(1494.8 0) scale(0.92 1) translate(-1494.8 0)">1</text></g>
<g><path d="M1556.8 128V103.3h19.8" fill="none" stroke="#6b6e73" stroke-width="1.25"/><path d="M1576.6 102.8l8.5 8.7h-8.5z" fill="#c1272d"/><path d="M1577.5 104l7.5 7.5v3l-7.5-7.5z" fill="#8e1b20" opacity="0.35"/><rect x="1556.3" y="127.8" width="32.6" height="15" fill="#c1272d"/><path d="M1574 117.2h11.5v-4.2l10 7.1-10 7.1v-4.2h-11.5z" fill="#1c86d2"/><text x="1558.6" y="140.3" font-size="12.8" fill="#fff" font-family="Liberation Sans, sans-serif">PDF</text></g>
</svg>
<div class="abs" style="left:5px;top:180px;width:375px;height:31px;background:#c9ccd1"></div>
<div class="t" style="left:35.98px;top:189px;font-size:13.75px;color:#50535a;transform:scaleX(0.9343);">BROWSER</div>
<div class="abs" style="left:50px;top:217px;width:117.5px;height:25px;background:#c9ccd1"></div>
<div class="abs" style="left:72px;top:247px;width:168px;height:25px;background:#c9ccd1"></div>
<div class="abs" style="left:72px;top:277px;width:93px;height:25px;background:#c9ccd1"></div>
<div class="abs" style="left:95px;top:307px;width:142.5px;height:25px;background:#c9ccd1"></div>
<div class="abs" style="left:95px;top:337px;width:107.5px;height:25px;background:#c9ccd1"></div>
<div class="abs" style="left:117px;top:367px;width:144px;height:25px;background:#c9ccd1"></div>
<div class="abs" style="left:117px;top:397px;width:200.5px;height:25px;background:#c9ccd1"></div>
<div class="t" style="left:90.58px;top:224px;font-size:13.5px;color:#3f4247;transform:scaleX(1.0441);text-shadow:0.6px 0.8px 0 rgba(255,255,255,0.55);">(Unsaved)</div>
<div class="t" style="left:113.15px;top:254px;font-size:13.75px;color:#3f4247;transform:scaleX(0.9745);text-shadow:0.6px 0.8px 0 rgba(255,255,255,0.55);">Document Settings</div>
<div class="t" style="left:113.4px;top:283px;font-size:14px;color:#3f4247;transform:scaleX(0.9601);text-shadow:0.6px 0.8px 0 rgba(255,255,255,0.55);">Sheet1</div>
<div class="t" style="left:134.87px;top:313px;font-size:14px;color:#3f4247;transform:scaleX(0.9741);text-shadow:0.6px 0.8px 0 rgba(255,255,255,0.55);">Sheet Settings</div>
<div class="t" style="left:135.45px;top:344px;font-size:13.5px;color:#3f4247;transform:scaleX(1.0281);text-shadow:0.6px 0.8px 0 rgba(255,255,255,0.55);">hour v4:1</div>
<div class="t" style="left:189.24px;top:373px;font-size:14px;color:#3f4247;transform:scaleX(0.9909);text-shadow:0.6px 0.8px 0 rgba(255,255,255,0.55);">Sketches</div>
<div class="t" style="left:220.93px;top:403px;font-size:14px;color:#3f4247;transform:scaleX(0.9312);text-shadow:0.6px 0.8px 0 rgba(255,255,255,0.55);">Component1:1</div>
<div class="abs" style="left:5px;top:921px;width:375px;height:31px;background:#c9ccd1"></div>
<div class="t" style="left:36.16px;top:929px;font-size:14.25px;color:#50535a;transform:scaleX(0.8644);">COMMENTS</div>
<div class="abs" style="left:0;top:958px;width:1841px;height:56px;background:linear-gradient(#cdd0d5 0,#cdd0d5 1px,#c5c8cd 1px,#c5c8cd)"></div>
<svg width="400" height="1014" viewBox="0 0 400 1014" style="left:0;top:0">
<defs><linearGradient id="gtri" x1="0" y1="0" x2="1" y2="1"><stop offset="0.4" stop-color="#c0c3c8"/><stop offset="0.95" stop-color="#4a4d52"/></linearGradient></defs>
<path d="M17.5 192.5v7.3l-6.3-3.65zM24.2 192.5v7.3l-6.3-3.65z" fill="#2f3236"/>
<circle cx="359.3" cy="195.6" r="5.6" fill="#2f3236"/><rect x="355.8" y="194.7" width="7" height="1.8" fill="#e8e8e8"/>
<path d="M374.3 190v11.5" stroke="#5a5d62" stroke-width="1"/><path d="M376.6 191.5v8.5" stroke="#8a8d92" stroke-width="1"/>
<circle cx="359.6" cy="936.8" r="5.6" fill="#2f3236"/><path d="M356.1 936.8h7M359.6 933.3v7" stroke="#e8e8e8" stroke-width="1.7"/>
<path d="M374.3 931v11.5" stroke="#5a5d62" stroke-width="1"/><path d="M376.6 932.5v8.5" stroke="#8a8d92" stroke-width="1"/>
<path d="M26.3 237.2l13.5 0 0-13.5z" fill="url(#gtri)" stroke="#2c2f34" stroke-width="1.5" stroke-linejoin="round"/>
<path d="M50.3 252.3v15.5l10.5-7.75z" fill="#b9bcc1" stroke="#2c2f34" stroke-width="1.5" stroke-linejoin="round"/>
<path d="M48.9 297.2l13.5 0 0-13.5z" fill="url(#gtri)" stroke="#2c2f34" stroke-width="1.5" stroke-linejoin="round"/>
<path d="M73 312.3v15.5l10.5-7.75z" fill="#b9bcc1" stroke="#2c2f34" stroke-width="1.5" stroke-linejoin="round"/>
<path d="M71.4 357.2l13.5 0 0-13.5z" fill="url(#gtri)" stroke="#2c2f34" stroke-width="1.5" stroke-linejoin="round"/>
<path d="M95.5 372.3v15.5l10.5-7.75z" fill="#b9bcc1" stroke="#2c2f34" stroke-width="1.5" stroke-linejoin="round"/>
<path d="M95.5 402.3v15.5l10.5-7.75z" fill="#b9bcc1" stroke="#2c2f34" stroke-width="1.5" stroke-linejoin="round"/>
<g><path d="M54.5 221.5h7l6.5 17.5h-13.5z" fill="#7c7f84"/><path d="M62.5 222h10v17.2h-3.5" fill="none" stroke="#5a5d62" stroke-width="1"/><path d="M71.5 220.8h2.2v2.2h-2.2zM71.5 238h2.2v2.2h-2.2z" fill="#5a5d62"/></g>
<path d="M95.96 258.54L95.96 261.86L93.18 261.77L92.28 263.95L94.3 265.86L91.96 268.2L90.05 266.18L87.87 267.08L87.96 269.86L84.64 269.86L84.73 267.08L82.55 266.18L80.64 268.2L78.3 265.86L80.32 263.95L79.42 261.77L76.64 261.86L76.64 258.54L79.42 258.63L80.32 256.45L78.3 254.54L80.64 252.2L82.55 254.22L84.73 253.32L84.64 250.54L87.96 250.54L87.87 253.32L90.05 254.22L91.96 252.2L94.3 254.54L92.28 256.45L93.18 258.63z" fill="#7d8085"/><circle cx="86.3" cy="260.2" r="3.3" fill="#c9ccd1"/>
<path d="M118.36 318.44L118.36 321.76L115.58 321.67L114.68 323.85L116.7 325.76L114.36 328.1L112.45 326.08L110.27 326.98L110.36 329.76L107.04 329.76L107.13 326.98L104.95 326.08L103.04 328.1L100.7 325.76L102.72 323.85L101.82 321.67L99.04 321.76L99.04 318.44L101.82 318.53L102.72 316.35L100.7 314.44L103.04 312.1L104.95 314.12L107.13 313.22L107.04 310.44L110.36 310.44L110.27 313.22L112.45 314.12L114.36 312.1L116.7 314.44L114.68 316.35L115.58 318.53z" fill="#7d8085"/><circle cx="108.7" cy="320.1" r="3.3" fill="#c9ccd1"/>
<g fill="none" stroke="#55585d" stroke-width="1.2"><rect x="76.6" y="283.6" width="19" height="13.3" fill="#d6d9de"/><path d="M85 296.9v-5.4h10.6"/></g>
<g fill="#d3d6db" stroke="#45484d" stroke-width="1.1" stroke-linejoin="round"><path d="M99.5 345l3-4.3h6.3l1.8 3v6h5.2l2.5 3v5.3l-2.8 1.7h-14.5l-1.5-2z"/><path d="M99.5 345.5h8.5v13.5M108 349.7h7.5M108 345.5l2.5-1.5M115.5 349.7v9" fill="none" stroke-width="0.9"/></g>
<g fill="none" stroke="#9b9ea3" stroke-width="1.1"><path d="M121.6 380c3-4.5 6.3-6.6 9.7-6.6s6.7 2.1 9.7 6.6c-3 4.5-6.3 6.6-9.7 6.6s-6.7-2.1-9.7-6.6z"/><circle cx="131.3" cy="380" r="3.3"/><path d="M124.5 373l13.5 14"/></g>
<path d="M152.8 372h8l1.5 2.3h10.3v13.3h-19.8z" fill="#7d8085"/><path d="M152.8 372h8l1 1.5h-9z" fill="#95989d"/>
<g><rect x="121.6" y="400.3" width="19.3" height="19.3" fill="#d8dbe3" stroke="#8a8d92" stroke-width="1"/><rect x="123.4" y="402.1" width="15.7" height="15.7" fill="none" stroke="#b6b9be" stroke-width="0.8"/><path d="M125.8 410.5l3.7 4.8 6.5-10.8" fill="none" stroke="#35448a" stroke-width="2.2"/></g>
<g><path d="M152.8 410c3-4.3 6.4-6.2 9.9-6.2s6.9 1.9 9.9 6.2c-3 4.3-6.4 6.2-9.9 6.2s-6.9-1.9-9.9-6.2z" fill="#85888d"/><circle cx="162.7" cy="410" r="3.6" fill="#c9ccd1"/><circle cx="162.7" cy="410" r="1.9" fill="#85888d"/></g>
<g stroke="#3c3f44" stroke-width="1.1" stroke-linejoin="round"><path d="M184.5 404l3.5-4h14.5c1 0 1.3 0.5 1.3 1.5v13.5l-3.8 4.5h-14c-1 0-1.5-0.5-1.5-1.5z" fill="#c6cad2"/><path d="M184.5 404.5h14.5c0.7 0 1 0.3 1 1v14" fill="none"/><path d="M199.5 404.5l4-4.3" fill="none"/></g>
<rect x="15.6" y="973.5" width="51.6" height="39.2" rx="3" fill="#d0d3d8" stroke="#0e86c8" stroke-width="3.5"/>
<g><rect x="30.5" y="976.4" width="23" height="34.3" fill="#96999e"/><rect x="31.3" y="977.9" width="21.4" height="31" fill="#d0d3d8" stroke="#17181b" stroke-width="1.3"/><rect x="32.9" y="979.5" width="18.2" height="22.8" fill="none" stroke="#17181b" stroke-width="0.9"/><rect x="31.3" y="1002" width="21.4" height="7" fill="#0c0d0f"/><path d="M32.8 1006.4h5.8M40.2 1006.4h4.8M46.3 1006.4h4.8" stroke="#e4e6e9" stroke-width="1.7"/><path d="M30.3 977.8h2M30.3 1008.9h2M51.7 977.8h2M51.7 1008.9h2" stroke="#0c0d0f" stroke-width="2.2"/></g>
<path d="M87.5 993.3h27.5M101.25 979.5v27.5" stroke="#484b50" stroke-width="5.4"/>
</svg>
<div class="abs" style="left:1603.5px;top:180px;width:238px;height:192px;background:#c9ccd1;border-top:1px solid #d6d9de;border-left:1px solid #bfc2c7"></div>
<div class="abs" style="left:1604px;top:210px;width:237px;height:1px;background:#aeb1b6"></div>
<div class="abs" style="left:1604px;top:325px;width:237px;height:1px;background:#a9acb1"></div>
<div class="t" style="left:1633.19px;top:188px;font-size:14.5px;color:#50535a;transform:scaleX(0.8524);">EXPORT PDF</div>
<div class="t" style="left:1618.47px;top:222px;font-size:15px;color:#35383d;transform:scaleX(0.9356);text-shadow:0.6px 0.8px 0 rgba(255,255,255,0.5);">Sheets</div>
<div class="abs" style="left:1710.5px;top:213.5px;width:140px;height:32.5px;background:#d3d6db;border:1px solid #dfe1e5;border-right:0;box-shadow:0 1px 1px rgba(0,0,0,0.18);border-radius:2px"></div>
<div class="t" style="left:1719.17px;top:222px;font-size:15px;color:#35383d;transform:scaleX(0.9221);text-shadow:0.6px 0.8px 0 rgba(255,255,255,0.5);">All Sheets</div>
<div class="t" style="left:1618.83px;top:260px;font-size:15px;color:#35383d;transform:scaleX(0.8516);text-shadow:0.6px 0.8px 0 rgba(255,255,255,0.5);">Open PDF</div>
<div class="t" style="left:1618.48px;top:297px;font-size:15px;color:#35383d;transform:scaleX(0.9458);text-shadow:0.6px 0.8px 0 rgba(255,255,255,0.5);">Lineweights</div>
<div class="abs" style="left:1716.3px;top:258.5px;width:16.4px;height:16.2px;background:linear-gradient(#cdd0d5,#b3b6bb);border:1.3px solid #484b50;border-radius:3.5px"></div>
<div class="abs" style="left:1716.3px;top:296.2px;width:16.4px;height:16.2px;background:linear-gradient(#cdd0d5,#b3b6bb);border:1.3px solid #484b50;border-radius:3.5px"></div>
<svg width="20" height="20" viewBox="0 0 20 20" style="left:1715px;top:295px"><path d="M5 10.3l3.3 3.7 6.2-9.7" fill="none" stroke="#1c1e22" stroke-width="1.7"/></svg>
<svg width="30" height="30" viewBox="0 0 30 30" style="left:1603px;top:181px"><circle cx="20.4" cy="14.4" r="5.6" fill="#2f3236"/><rect x="16.9" y="13.5" width="7" height="1.8" fill="#e8e8e8"/><path d="M3.5 9.5v10.5" stroke="#8a8d92" stroke-width="1"/><path d="M5.8 8.5v12" stroke="#5a5d62" stroke-width="1"/></svg>
<div class="abs" style="left:1738.3px;top:336.3px;width:74.6px;height:30px;background:#c5c8cd;border:1px solid #9a9da2"></div>
<div class="abs" style="left:1826px;top:336.3px;width:74.6px;height:30px;background:#c5c8cd;border:1px solid #9a9da2"></div>
<div class="t" style="left:1765.05px;top:341px;font-size:15px;color:#35383d;transform:scaleX(0.9957);">OK</div>
<div class="abs" style="left:1616px;top:339.5px;width:12px;height:12px;border-radius:6px;background:#2f3236"></div>
<div class="abs" style="left:1838px;top:372px;width:3px;height:586px;background:#74777c"></div>
<div class="abs" style="left:902px;top:345px;width:936px;height:669px;background:#fff;box-shadow:0 0 1px rgba(255,255,255,0.6)"></div>
<div class="t" style="left:938.39px;top:386px;font-size:30.25px;color:#5c5f64;transform:scaleX(0.992);">Export PDF</div>
<svg width="20" height="20" viewBox="0 0 20 20" style="left:1782.7px;top:392.8px"><path d="M1.3 1.3l17.4 17.4M18.7 1.3L1.3 18.7" stroke="#505050" stroke-width="1.3" fill="none"/></svg>
<div class="abs" style="left:902px;top:449px;width:936px;height:1px;background:#c6c6c6"></div>
<div class="t" style="left:937.33px;top:486px;font-size:16px;color:#707070;transform:scaleX(1.0282);">Name:</div>
<svg width="870" height="42" viewBox="0 0 870 42" style="left:936px;top:514px"><rect x="2.9" y="2.9" width="862.2" height="35.3" rx="4" fill="#fff" stroke="#3db3e8" stroke-width="1.8"/></svg>
<div class="t" style="left:954.14px;top:526px;font-size:16.5px;color:#707070;transform:scaleX(0.9612);">Hour</div>
<div class="abs" style="left:989px;top:525.5px;width:1px;height:18px;background:#111"></div>
<div class="t" style="left:939.14px;top:567px;font-size:16.25px;color:#707070;transform:scaleX(0.8803);">Type:</div>
<div class="abs" style="left:938px;top:599.5px;width:864px;height:37px;border:1px solid #cfcfcf;border-radius:3.5px;background:linear-gradient(90deg,#fff 836px,#f6f6f6 836px);box-shadow:0 1px 0.5px rgba(0,0,0,0.1)"></div>
<div class="t" style="left:951.03px;top:610px;font-size:16.25px;color:#121212;transform:scaleX(0.956);">PDF Files (*.pdf)</div>
<svg width="14" height="8" viewBox="0 0 14 8" style="left:1781px;top:614px"><path d="M0.5 0.5h12l-6 6.5z" fill="#111"/></svg>
<div class="abs" style="left:938.5px;top:663px;width:16.2px;height:16px;border:1px solid #6f6f6f;border-radius:3px;background:#f2f2f2"></div>
<div class="t" style="left:961.09px;top:664px;font-size:16.75px;color:#686868;transform:scaleX(0.9768);">Save to a project in the cloud</div>
<div class="abs" style="left:938px;top:697.5px;width:804.5px;height:44px;border:1px solid #cfcfcf;border-radius:3.5px;background:#fff;box-shadow:0 1px 0.5px rgba(0,0,0,0.1)"></div>
<div class="t" style="left:954.63px;top:712px;font-size:16.5px;color:#777;transform:scaleX(0.9016);">WTF clock</div>
<div class="abs" style="left:1758px;top:698px;width:43.5px;height:43.5px;border:1px solid #8c8c8c;border-radius:4px;background:#f9f9f9"></div>
<svg width="14" height="8" viewBox="0 0 14 8" style="left:1773px;top:715.5px"><path d="M0.5 0.5h12l-6 6.5z" fill="#111"/></svg>
<svg width="18" height="18" viewBox="0 0 18 18" style="left:939px;top:904px"><rect x="0.3" y="0" width="16.7" height="16.3" rx="3" fill="#0c60c6"/></svg>
<svg width="16" height="16" viewBox="0 0 16 16" style="left:940px;top:904px"><path d="M4.7 8.6l2.3 2.2 4.3-4.6" fill="none" stroke="#fff" stroke-width="1.4"/></svg>
<div class="t" style="left:962.24px;top:905px;font-size:16.5px;color:#646464;transform:scaleX(0.9892);">Save to my computer</div>
<div class="abs" style="left:1142.5px;top:896.5px;width:621.5px;height:32.5px;border-radius:4px;background:#f3f4f6"></div>
<div class="t" style="left:1149.96px;top:905px;font-size:16.5px;color:#6a6a6a;transform:scaleX(0.9675);">C:/Users/...Downloads</div>
<div class="abs" style="left:1771.5px;top:896.5px;width:28.5px;height:32.5px;border:1px solid #9a9a9a;border-radius:4px;background:#fafafa"></div>
<div class="t" style="left:1778.62px;top:908px;font-size:13px;color:#777;transform:scaleX(1.1775);">...</div>
<div class="abs" style="left:1625.3px;top:961.5px;width:91px;height:42.5px;border:1px solid #9c9c9c;border-radius:4px;background:#fafafa"></div>
<div class="t" style="left:1645.84px;top:975px;font-size:16.5px;color:#646464;transform:scaleX(0.9661);">Cancel</div>
<div class="abs" style="left:1724px;top:961.5px;width:76px;height:42.5px;border-radius:4px;background:#00a5e3"></div>
<div class="t" style="left:1744.6px;top:975px;font-size:16.5px;color:#fff;transform:scaleX(0.9115);">Save</div>
</body>
</html>
